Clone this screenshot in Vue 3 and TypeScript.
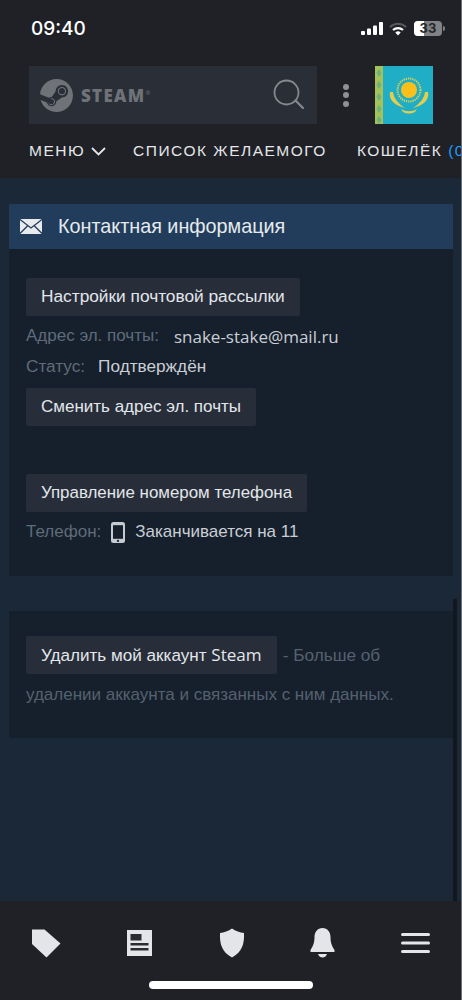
<template>
  <div class="page">
    <header class="top">
      <div class="status">
        <span class="time">09:40</span>
        <div class="status-icons">
          <svg width="22" height="13" viewBox="0 0 22 13">
            <rect x="0" y="9" width="4" height="4" rx="1" fill="#fff" />
            <rect x="6" y="6.5" width="4" height="6.5" rx="1" fill="#fff" />
            <rect x="12" y="3.5" width="4" height="9.5" rx="1" fill="#fff" />
            <rect x="18" y="0" width="4" height="13" rx="1" fill="#fff" />
          </svg>
          <svg class="wifi" width="18" height="14" viewBox="0 0 18 14">
            <path d="M1 5a11.5 11.5 0 0 1 16 0" fill="none" stroke="#55585d" stroke-width="2.2" />
            <path d="M4 8a7.4 7.4 0 0 1 10 0" fill="none" stroke="#fff" stroke-width="2.2" />
            <path d="M9 13.5 6.3 10.6a3.8 3.8 0 0 1 5.4 0z" fill="#fff" />
          </svg>
          <div class="battery"><span class="battery-fill"></span><span class="battery-num">33</span></div>
          <span class="battery-tip"></span>
        </div>
      </div>

      <div class="search-row">
        <div class="search">
          <svg class="steam-logo" viewBox="0 0 24 24" width="33" height="33">
            <path fill="#6f7277" d="M11.979 0C5.678 0 .511 4.86.022 11.037l6.432 2.658c.545-.371 1.203-.59 1.912-.59.063 0 .125.004.188.006l2.861-4.142V8.91c0-2.495 2.028-4.524 4.524-4.524 2.494 0 4.524 2.031 4.524 4.527s-2.03 4.525-4.524 4.525h-.105l-4.076 2.911c0 .052.004.105.004.159 0 1.875-1.515 3.396-3.39 3.396-1.635 0-3.016-1.173-3.331-2.727L.436 15.27C1.862 20.307 6.486 24 11.979 24c6.627 0 11.999-5.373 11.999-12S18.605 0 11.979 0zM7.54 18.21l-1.473-.61c.262.543.714.999 1.314 1.25 1.297.539 2.793-.076 3.332-1.375.263-.63.264-1.319.005-1.949s-.75-1.121-1.377-1.383c-.624-.26-1.29-.249-1.878-.03l1.523.63c.956.4 1.409 1.5 1.009 2.455-.397.957-1.497 1.41-2.454 1.012H7.54zm11.415-9.303c0-1.662-1.353-3.015-3.015-3.015-1.665 0-3.015 1.353-3.015 3.015 0 1.665 1.35 3.015 3.015 3.015 1.663 0 3.015-1.35 3.015-3.015zm-5.273-.005c0-1.252 1.013-2.266 2.265-2.266 1.249 0 2.266 1.014 2.266 2.266 0 1.251-1.017 2.265-2.266 2.265-1.253 0-2.265-1.014-2.265-2.265z" />
          </svg>
          <span class="steam-word">STEAM<sup>®</sup></span>
          <svg class="search-icon" width="32" height="32" viewBox="0 0 32 32">
            <circle cx="13.5" cy="13.5" r="12" fill="none" stroke="#85888d" stroke-width="1.8" />
            <path d="M22.5 21.5 30 29" fill="none" stroke="#85888d" stroke-width="2.2" stroke-linecap="round" />
          </svg>
        </div>
        <div class="dots"><i></i><i></i><i></i></div>
        <svg class="flag" width="58" height="58" viewBox="0 0 58 58">
          <rect width="58" height="58" fill="#1faec6" />
          <rect width="8" height="58" fill="#a3c25a" />
          <path d="M4 3l2.500 4-2.500 4-2.500-4zM4 15l2.500 4-2.500 4-2.500-4zM4 27l2.500 4-2.500 4-2.500-4zM4 39l2.500 4-2.500 4-2.500-4zM4 50l2.500 4-2.500 4-2.500-4z" fill="#6fb07c" />
          <circle cx="34" cy="24" r="11.500" fill="none" stroke="#e9d34a" stroke-width="2" stroke-dasharray="1.2 1" />
          <circle cx="34" cy="24" r="8" fill="#fbbf1c" />
          <path d="M15 26c-2 9 7 14 15 16-7-5-11-9-12-16zM53 26c2 9-7 14-15 16 7-5 11-9 12-16z" fill="#e2cd4c" />
          <path d="M26 43c5 3 11 3 16 0l-2 3c-4 2-8 2-12 0z" fill="#e2cd4c" />
        </svg>
      </div>

      <nav class="nav">
        <span>МЕНЮ</span>
        <svg class="chev" width="15" height="9" viewBox="0 0 15 9">
          <path d="M1 1l6.5 6.5L14 1" fill="none" stroke="#e4e6e9" stroke-width="1.8" />
        </svg>
        <span class="nav-wish">СПИСОК ЖЕЛАЕМОГО</span>
        <span class="nav-wallet">КОШЕЛЁК <b>(0</b></span>
      </nav>
    </header>

    <main class="main">
      <section class="card first">
        <h2 class="card-title">
          <svg width="22" height="15" viewBox="0 0 22 15">
            <rect width="22" height="15" rx="1" fill="#e8ebee" />
            <path d="M0 .5 11 9 22 .5M0 14.5 8 6.5M22 14.5 14 6.5" fill="none" stroke="#213d5b" stroke-width="1.3" />
          </svg>
          <span>Контактная информация</span>
        </h2>
        <div class="card-body contact">
          <a class="btn mailing">Настройки почтовой рассылки</a>
          <p class="line mail"><span class="label">Адрес эл. почты:</span><span class="latin">snake-stake@mail.ru</span></p>
          <p class="line status-line"><span class="label">Статус:</span><span>Подтверждён</span></p>
          <a class="btn change">Сменить адрес эл. почты</a>
          <a class="btn phone-btn">Управление номером телефона</a>
          <p class="line phone"><span class="label">Телефон:</span>
            <svg width="14" height="21" viewBox="0 0 14 21">
              <rect x="0" y="0" width="14" height="21" rx="2.5" fill="#c6cbd1" />
              <rect x="2" y="3.2" width="10" height="13.6" fill="#16202d" />
              <circle cx="7" cy="18.9" r="1.1" fill="#16202d" />
            </svg>
            <span>Заканчивается на 11</span>
          </p>
        </div>
      </section>

      <section class="card second">
        <div class="delete-row">
          <a class="btn delete">Удалить мой аккаунт <span class="latin">Steam</span></a>
          <span class="muted">- Больше об</span>
        </div>
        <p class="muted delete-more">удалении аккаунта и связанных с ним данных.</p>
      </section>
    </main>

    <div class="scrollbar"></div>
    <div class="edge"></div>

    <footer class="tabs">
      <div class="tab-icons">
        <svg width="30" height="30" viewBox="0 0 30 30">
          <path d="M1 1.500H13.500L29.500 15.500 15.500 29.500 1 16z" fill="#e3e5e8" />
        </svg>
        <svg width="26" height="26" viewBox="0 0 26 26">
          <rect width="25" height="26" fill="#e3e5e8" />
          <rect x="3.500" y="4" width="11" height="6.500" fill="#2a2c31" />
          <rect x="3.500" y="13" width="18" height="2.500" fill="#2a2c31" />
          <rect x="3.500" y="18" width="18" height="2.500" fill="#2a2c31" />
        </svg>
        <svg width="26" height="30" viewBox="0 0 26 30">
          <path d="M13 .500C9.500 3 5 4.500 1 5c-.5 11 2 19 12 24.500C23 24 25.500 16 25 5c-4-.5-8.500-2-12-4.500z" fill="#e3e5e8" />
        </svg>
        <svg width="25" height="30" viewBox="0 0 25 30">
          <path d="M12.500 0c-5 0-8 4-8 9 0 6-1.500 9-4 13v2h24v-2c-2.500-4-4-7-4-13 0-5-3-9-8-9z" fill="#e3e5e8" />
          <path d="M8 26h9c-.8 2.500-2.500 3.500-4.500 3.500S8.800 28.500 8 26z" fill="#e3e5e8" />
        </svg>
        <svg width="29" height="21" viewBox="0 0 29 21">
          <rect y="0" width="29" height="3" rx="1.500" fill="#e3e5e8" />
          <rect y="8.500" width="29" height="3" rx="1.500" fill="#e3e5e8" />
          <rect y="17" width="29" height="3" rx="1.500" fill="#e3e5e8" />
        </svg>
      </div>
      <div class="home-bar"></div>
    </footer>
  </div>
</template>

<script setup lang="ts">
</script>

<style>
html, body { margin: 0; background: #1b2838; }
</style>

<style scoped>
.page {
  position: relative;
  width: 462px;
  height: 1000px;
  display: flex;
  flex-direction: column;
  overflow: hidden;
  background: #1b2838;
  font-family: "Liberation Sans", Arial, sans-serif;
  color: #d5d9de;
}

/* верхняя часть */
.top {
  height: 178px;
  flex: none;
  background: #1f2126;
  box-sizing: border-box;
  padding: 0 0 0 29px;
}
.status {
  height: 66px;
  display: flex;
  align-items: flex-start;
  justify-content: space-between;
  padding: 17px 17px 0 2px;
  box-sizing: border-box;
}
.time {
  font-family: Inter, sans-serif;
  font-size: 19px;
  font-weight: 500;
  line-height: 23px;
  color: #fff;
}
.status-icons {
  display: flex;
  align-items: center;
  margin-top: 4px;
}
.wifi { margin-left: 6px; }
.battery {
  position: relative;
  width: 28px;
  height: 15px;
  margin-left: 7px;
  border-radius: 4px;
  background: #808285;
  overflow: hidden;
}
.battery-fill {
  position: absolute;
  left: 0;
  top: 0;
  bottom: 0;
  width: 10px;
  background: #fff;
}
.battery-num {
  position: absolute;
  inset: 0;
  text-align: center;
  font-family: Inter, sans-serif;
  font-size: 13px;
  font-weight: 700;
  line-height: 15px;
  color: #25272b;
}
.battery-tip {
  width: 2px;
  height: 5px;
  margin-left: 1px;
  border-radius: 0 2px 2px 0;
  background: #808285;
}
.search-row {
  display: flex;
  align-items: center;
  height: 58px;
}
.search {
  width: 288px;
  height: 58px;
  display: flex;
  align-items: center;
  padding: 0 12px 0 11px;
  box-sizing: border-box;
  background: #2a2e37;
}
.steam-word {
  margin-left: 8px;
  font-family: "Open Sans", sans-serif;
  font-size: 17px;
  font-weight: 800;
  letter-spacing: 1.300px;
  color: #6f7277;
}
.steam-word sup {
  font-size: 6px;
  font-weight: 400;
  letter-spacing: 0;
  vertical-align: 7px;
  line-height: 0;
}
.search-icon { margin-left: auto; }
.dots {
  width: 58px;
  display: flex;
  flex-direction: column;
  align-items: center;
  gap: 2.500px;
}
.dots i {
  width: 6px;
  height: 6px;
  border-radius: 50%;
  background: #8d9094;
}
.flag { flex: none; }
.nav {
  display: flex;
  align-items: center;
  height: 54px;
  white-space: nowrap;
  font-size: 15.500px;
  letter-spacing: 1.500px;
  color: #e4e6e9;
}
.chev { margin-left: 6px; flex: none; }
.nav-wish { margin-left: 27px; }
.nav-wallet { margin-left: 30px; }
.nav-wallet b { font-weight: 400; color: #1a9fff; }

/* основная часть */
.main {
  flex: 1;
  padding: 26px 9px 0;
}
.card { background: #16202d; }
.card-title {
  margin: 0;
  height: 45px;
  display: flex;
  align-items: center;
  gap: 16px;
  padding-left: 11px;
  background: #213d5b;
  font-size: 19.800px;
  font-weight: 400;
  color: #e6eaee;
}
.card-body { padding: 29px 17px 0; }
.contact { height: 327px; box-sizing: border-box; }
.btn {
  display: inline-block;
  height: 38px;
  padding: 0 15px;
  box-sizing: border-box;
  border-radius: 2px;
  background: #272e3a;
  font-size: 17px;
  line-height: 37px;
  color: #e3e6ea;
}
.mailing { font-size: 17.300px; }
.phone-btn { font-size: 16.900px; }
.delete { font-size: 17.100px; }
.line {
  margin: 0;
  display: flex;
  align-items: center;
  height: 30px;
  font-size: 17px;
  color: #c9ced4;
}
.label { color: #5f6b78; }
.mail { margin-top: 5px; gap: 15px; }
.status-line { gap: 13px; font-size: 17.200px; }
.change { margin-top: 7px; }
.phone-btn { margin-top: 48px; }
.phone { margin-top: 5px; gap: 10px; }
.latin { font-family: "Open Sans", sans-serif; }
.second {
  height: 127px;
  margin-top: 35px;
  padding: 25px 17px 0;
  box-sizing: border-box;
}
.delete-row {
  display: flex;
  align-items: center;
  gap: 6px;
}
.muted {
  font-size: 17.200px;
  color: #55606d;
}
.delete-more { margin: 6px 0 0; font-size: 17px; line-height: 30px; }

.scrollbar {
  position: absolute;
  right: 5px;
  top: 599px;
  width: 4px;
  height: 302px;
  background: #10171f;
}
.edge {
  position: absolute;
  right: 0;
  top: 0;
  bottom: 0;
  width: 1px;
  background: #6d7178;
  z-index: 1;
}

/* нижняя панель */
.tabs {
  flex: none;
  height: 99px;
  background: #1f2126;
}
.tab-icons {
  height: 80px;
  box-sizing: border-box;
  padding: 4px 32px 0 31px;
  display: flex;
  align-items: center;
  justify-content: space-between;
}
.home-bar {
  width: 164px;
  height: 8px;
  margin: 0 auto;
  border-radius: 4px;
  background: #fff;
}
</style>
